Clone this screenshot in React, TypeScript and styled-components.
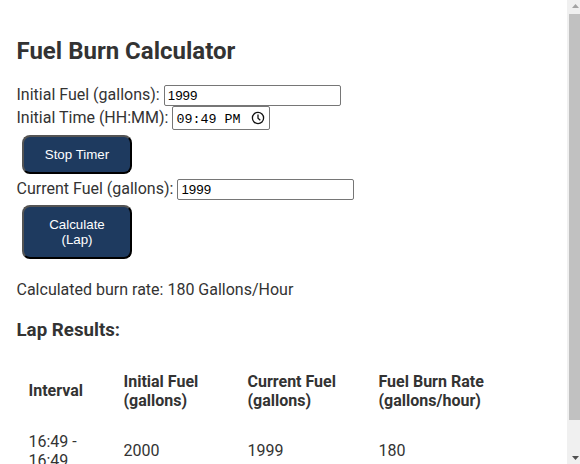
import React from "react";
import styled, { createGlobalStyle } from "styled-components";

const GlobalStyle = createGlobalStyle`
  html, body { margin: 0; background: #fff; overflow: hidden; }
  * { box-sizing: border-box; }
`;

const Viewport = styled.div`
  display: flex;
  width: 580px;
  height: 464px;
  overflow: hidden;
  color: #333;
  font: 16px/19px Roboto, sans-serif;
`;

const Content = styled.main`
  flex: 1;
  min-width: 0;
  height: 464px;
  overflow: hidden;
  padding: 37px 0 0 16.5px;
`;

const Title = styled.h1`
  margin: 0 0 19px;
  font-size: 24px;
  line-height: 29px;
  font-weight: 700;
`;

const FieldRow = styled.div<{ $height: number; $drop?: number }>`
  display: flex;
  align-items: flex-start;
  gap: 4px;
  height: ${(p) => p.$height}px;
  & > label { padding-top: ${(p) => p.$drop ?? 0}px; }
`;

const Label = styled.label`
  white-space: nowrap;
`;

const TextInput = styled.input`
  width: 177px;
  height: 21px;
  margin: 0;
  padding: 1px 3px;
  border: 1px solid #767676;
  border-radius: 2px;
  background: #fff;
  color: #000;
  font: 13.333px "Liberation Sans", Arial, sans-serif;
  outline: none;
`;

const TimeField = styled.div`
  display: flex;
  align-items: center;
  justify-content: space-between;
  width: 98px;
  height: 24px;
  padding: 2px 4px 0 3px;
  border: 1px solid #767676;
  border-radius: 2px;
  color: #000;
  font: 13.333px/20px "Liberation Mono", monospace;
  white-space: pre;
`;

const TimeValue = styled.span`
  padding-top: 2px;
`;

const ClockIcon = styled.svg`
  width: 14px;
  height: 14px;
  margin-top: -2px;
`;

const Button = styled.button<{ $height: number }>`
  display: block;
  width: 110px;
  height: ${(p) => p.$height}px;
  margin: 5px 5px 5px 5.5px;
  padding: 10px 20px;
  border: 2px outset #000;
  border-radius: 8px;
  background: #1e3a5f;
  color: #fff;
  font: 13.333px/15px "Liberation Sans", Arial, sans-serif;
`;

const Result = styled.p`
  margin: 21px 0 20px;
`;

const Subtitle = styled.h3`
  margin: 0;
  font-size: 18.72px;
  line-height: 22px;
`;

const LapTable = styled.div`
  display: grid;
  grid-template-columns: 95px 124px 131px 130px;
  grid-template-rows: 62px 57px;
  align-items: center;
  margin: 19px 0 0 12px;
`;

const Cell = styled.div<{ $head?: boolean }>`
  font-weight: ${(p) => (p.$head ? 700 : 400)};
  white-space: pre-line;
  &:first-child { padding-bottom: 2px; }
`;

const ScrollTrack = styled.div`
  display: flex;
  flex-direction: column;
  align-items: flex-end;
  width: 13px;
  height: 464px;
  background: #f0f0f0;
`;

const ScrollArrow = styled.svg`
  flex: none;
  width: 11px;
  height: 14px;
`;

const ScrollThumb = styled.div`
  width: 11px;
  height: 406px;
  margin-bottom: 30px;
  background: #c1c1c1;
`;

const headings = ["Interval", "Initial Fuel\n(gallons)", "Current Fuel\n(gallons)", "Fuel Burn Rate\n(gallons/hour)"];
const lap = ["16:49 -\n16:49", "2000", "1999", "180"];

export default function App() {
  return (
    <Viewport>
      <GlobalStyle />
      <Content>
        <Title>Fuel Burn Calculator</Title>
        <FieldRow $height={21}>
          <Label htmlFor="initial">Initial Fuel (gallons):</Label>
          <TextInput id="initial" defaultValue="1999" />
        </FieldRow>
        <FieldRow $height={24} $drop={2}>
          <Label>Initial Time (HH:MM):</Label>
          <TimeField>
            <TimeValue>09:49 PM</TimeValue>
            <ClockIcon viewBox="0 0 14 14" fill="none" stroke="#111" strokeWidth="1.3">
              <circle cx="7" cy="7" r="5.6" />
              <path d="M7 3.5V7.2L9.3 9.2" />
            </ClockIcon>
          </TimeField>
        </FieldRow>
        <Button $height={39}>Stop Timer</Button>
        <FieldRow $height={21}>
          <Label htmlFor="current">Current Fuel (gallons):</Label>
          <TextInput id="current" defaultValue="1999" />
        </FieldRow>
        <Button $height={54}>Calculate (Lap)</Button>
        <Result>Calculated burn rate: 180 Gallons/Hour</Result>
        <Subtitle>Lap Results:</Subtitle>
        <LapTable>
          {headings.map((text) => <Cell key={text} $head>{text}</Cell>)}
          {lap.map((text) => <Cell key={text}>{text}</Cell>)}
        </LapTable>
      </Content>
      <ScrollTrack>
        <ScrollArrow viewBox="0 0 11 14"><path d="M3 8L6.5 4L10 8Z" fill="#a3a3a3" /></ScrollArrow>
        <ScrollThumb />
        <ScrollArrow viewBox="0 0 11 14"><path d="M3 6L6.5 10L10 6Z" fill="#505050" /></ScrollArrow>
      </ScrollTrack>
    </Viewport>
  );
}
